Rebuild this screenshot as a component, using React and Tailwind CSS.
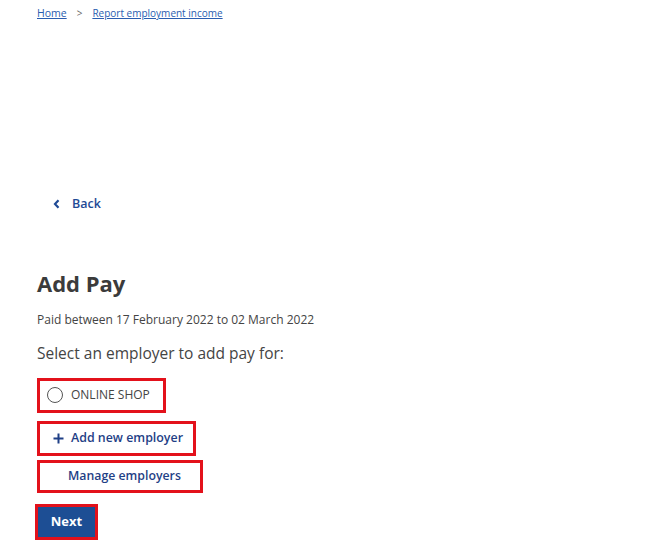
import React from 'react';

function App() {
    return (
        <div className="min-h-[553px] bg-white pl-[37px] font-['Open_Sans',sans-serif] text-[#3b3b3b]">
            <nav className="pt-[5px] flex items-center text-[10px] leading-[16px]">
                <a href="#" className="text-[#2a5db0] underline text-[10.5px]">Home</a>
                <span className="mx-[10px] text-[#666]">&gt;</span>
                <a href="#" className="text-[#2a5db0] underline">Report employment income</a>
            </nav>

            <div className="mt-[174px] ml-[16px] flex items-center gap-[12px] text-[#1f4a95]">
                <svg width="7" height="10" viewBox="0 0 7 10">
                    <path d="M5.5 1.2 L2 5 L5.5 8.8" fill="none" stroke="#1f4a95" strokeWidth="2.2" />
                </svg>
                <span className="text-[12.5px] font-semibold">Back</span>
            </div>

            <h1 className="mt-[54px] text-[22px] leading-[30px] font-bold text-[#3b3b3b]">Add Pay</h1>
            <p className="mt-[13px] text-[12px] leading-[18px] text-[#444]">Paid between 17 February 2022 to 02 March 2022</p>
            <p className="mt-[13px] text-[15.5px] leading-[22px] text-[#444]">Select an employer to add pay for:</p>

            <div className="mt-[14px] flex flex-col items-start">
                <label className="w-[129px] h-[35px] border-[3px] border-[#e3111b] flex items-center pl-[7px] gap-[8px]">
                    <span className="w-[16px] h-[16px] rounded-full border-[1.5px] border-[#555]" />
                    <span className="text-[12px] text-[#444]">ONLINE SHOP</span>
                </label>
                <button className="mt-[8px] w-[159px] h-[35px] border-[3px] border-[#e3111b] flex items-center pl-[13px] gap-[7px] text-[#1f3f86] font-semibold text-[12.4px]">
                    <svg width="11" height="11" viewBox="0 0 11 11">
                        <path d="M5.5 0.5 V10.5 M0.5 5.5 H10.5" stroke="#1f3f86" strokeWidth="2" />
                    </svg>
                    <span>Add new employer</span>
                </button>
                <button className="mt-[4px] w-[166px] h-[33px] border-[3px] border-[#e3111b] flex items-center pl-[28px] text-[#1f3f86] font-semibold text-[12.3px]">
                    Manage employers
                </button>
                <button className="mt-[11px] -ml-[2px] w-[63px] h-[36px] border-[3px] border-[#e3111b] bg-[#1d4e94] flex items-center justify-center text-white font-bold text-[13px]">
                    Next
                </button>
            </div>
        </div>
    );
}

export default App;
